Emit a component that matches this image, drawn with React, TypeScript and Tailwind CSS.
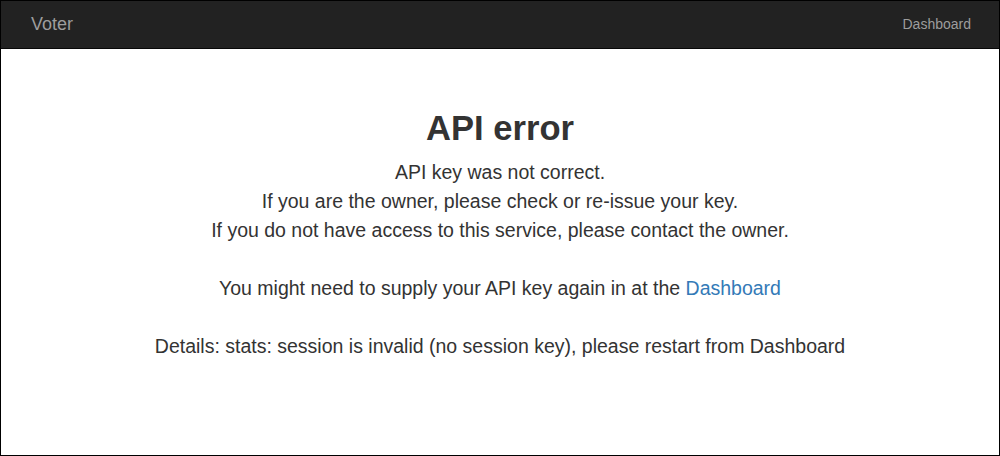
import React from "react";

export default function App() {
  return (
    <div
      className="w-[1000px] h-[456px] border border-black bg-white overflow-hidden"
      style={{ fontFamily: '"Liberation Sans", Arial, sans-serif' }}
    >
      <nav className="h-[48px] bg-[#222222] border-b border-[#080808] flex items-center justify-between pl-[30px] pr-[28px]">
        <span className="text-[18px] text-[#9d9d9d]">Voter</span>
        <span className="text-[14px] text-[#9d9d9d]">Dashboard</span>
      </nav>
      <div className="text-center text-[#333333] pt-[59px]">
        <h1 className="text-[34.6px] font-bold leading-[40px] mb-[10px]">API error</h1>
        <div className="text-[19.5px] leading-[29px]">
          API key was not correct.
          <br />
          If you are the owner, please check or re-issue your key.
          <br />
          If you do not have access to this service, please contact the owner.
          <br />
          <br />
          You might need to supply your API key again in at the{" "}
          <a className="text-[#337ab7]">Dashboard</a>
          <br />
          <br />
          Details: stats: session is invalid (no session key), please restart from Dashboard
        </div>
      </div>
    </div>
  );
}
